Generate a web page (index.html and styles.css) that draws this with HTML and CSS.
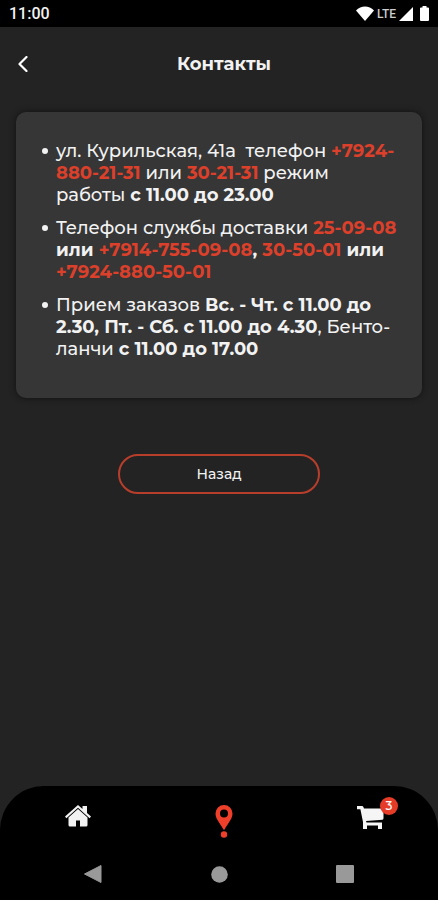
FILE: index.html
```html
<!DOCTYPE html>
<html lang="ru">
<head>
<meta charset="utf-8">
<meta name="viewport" content="width=device-width, initial-scale=1">
<title>Контакты</title>
<link rel="stylesheet" href="styles.css">
</head>
<body>
<div class="status">
  <span class="clock">11:00</span>
  <div class="signals">
    <svg width="18" height="15" viewBox="0 0 18 15" fill="#fff"><path d="M0 4.500C5-.9 13-.9 18 4.500L9 15z"/></svg>
    <span class="network">LTE</span>
    <svg width="14" height="14" viewBox="0 0 14 14" fill="#fff"><path d="M14 0v14H0z"/></svg>
    <svg class="battery" width="9" height="15" viewBox="0 0 9 15" fill="#fff"><path d="M2.500 0h4v1.500H8q1 0 1 1V14q0 1-1 1H1q-1 0-1-1V2.500q0-1 1-1h1.500z"/></svg>
  </div>
</div>
<header class="header">
  <button class="back" type="button" aria-label="Назад">
    <svg width="10" height="16" viewBox="0 0 10 16" fill="none" stroke="#fff" stroke-width="2.200" stroke-linecap="round" stroke-linejoin="round"><path d="M8.500 1L1.500 8l7 7"/></svg>
  </button>
  <h1 class="title">Контакты</h1>
</header>
<main class="main">
  <section class="card">
    <ul class="contacts">
      <li>ул. Курильская, 41а&nbsp; телефон <a href="tel:+79248802131">+7924-<br>880-21-31</a> или <a href="tel:302131">30-21-31</a> режим<br>работы <b>с 11.00 до 23.00</b></li>
      <li>Телефон службы доставки <a href="tel:250908">25-09-08</a><br><b>или <a href="tel:+79147550908">+7914-755-09-08</a>, <a href="tel:305001">30-50-01</a> или</b><br><a href="tel:+79248805001">+7924-880-50-01</a></li>
      <li>Прием заказов <b>Вс. - Чт. с 11.00 до<br>2.30, Пт. - Сб. с 11.00 до 4.30</b>, Бенто-<br>ланчи <b>с 11.00 до 17.00</b></li>
    </ul>
  </section>
  <button class="return" type="button">Назад</button>
</main>
<footer class="footer">
  <nav class="tabs">
    <a class="tab" href="#home" aria-label="Главная">
      <svg width="26" height="22" viewBox="0 0 26 22" fill="#f2f2f2"><path d="M13 0l4.500 4V1h4.500v7l4 3.500-1.400 1.700L13 2.800 1.400 13.200 0 11.500z"/><path d="M13 4l9.500 8.400V20q0 1.500-1.500 1.500h-6V15.500h-4v6H5q-1.500 0-1.500-1.500v-7.600z"/></svg>
    </a>
    <a class="tab" href="#contacts" aria-label="Контакты">
      <svg width="18" height="34" viewBox="0 0 18 34"><path fill="#ee3f2a" fill-rule="evenodd" d="M9 0a8.500 8.500 0 0 1 8.500 8.500C17.500 14 13 18 9.700 24.300q-.7 1-1.400 0C5 18 .5 14 .5 8.500A8.500 8.500 0 0 1 9 0zm0 4.500a4 4 0 1 0 0 8 4 4 0 0 0 0-8z"/><circle cx="9" cy="29.500" r="3.200" fill="#ee3f2a"/></svg>
    </a>
    <a class="tab" href="#cart" aria-label="Корзина">
      <svg width="28" height="25" viewBox="0 0 28 25" fill="#f5f5f5"><path d="M0 1h5q1 0 1.400 1L7 3.500h19.500v9.500q0 1.500-1 1.700L9 16l.5 1.500H25V24h-4v-3.500H10V24H6v-7L3.400 4.300H0z"/></svg>
      <span class="badge">3</span>
    </a>
  </nav>
  <div class="system">
    <svg width="18" height="18" viewBox="0 0 18 18" fill="#999"><path d="M17 .5v17L.5 9z" stroke="#999" stroke-linejoin="round"/></svg>
    <svg width="17" height="17" viewBox="0 0 17 17" fill="#999"><circle cx="8.500" cy="8.500" r="8.300"/></svg>
    <svg width="18" height="18" viewBox="0 0 18 18" fill="#999"><rect width="18" height="18" rx="1"/></svg>
  </div>
</footer>
</body>
</html>
```

FILE: styles.css
```css
* {
  box-sizing: border-box;
}

body {
  margin: 0;
  min-height: 100vh;
  display: flex;
  flex-direction: column;
  background: #232323;
  color: #f2f2f2;
  font-family: Montserrat, Inter, "Noto Sans", sans-serif;
}

button {
  font: inherit;
  color: inherit;
  background: none;
  border: 0;
  padding: 0;
}

a {
  color: #dc402b;
  font-weight: 700;
  text-decoration: none;
}

svg {
  display: block;
}

.status {
  display: flex;
  align-items: center;
  justify-content: space-between;
  height: 27px;
  padding: 0 9px;
  background: #000;
  font-family: Roboto, sans-serif;
}

.clock {
  font-size: 16px;
  font-weight: 500;
}

.signals {
  display: flex;
  align-items: center;
  gap: 3px;
}

.network {
  color: #ccc;
  font-size: 12px;
  font-weight: 500;
}

.battery {
  margin-left: 4px;
}

.header {
  display: grid;
  grid-template-columns: 45px 1fr 35px;
  align-items: center;
  height: 74px;
}

.back {
  display: flex;
  align-items: center;
  justify-content: center;
  height: 44px;
}

.title {
  margin: 0;
  font-size: 18px;
  line-height: 22px;
  font-weight: 700;
  text-align: center;
}

.main {
  flex: 1;
  display: flex;
  flex-direction: column;
  align-items: center;
  gap: 56px;
  padding: 11px 16px;
}

.card {
  width: 100%;
  padding: 28px 16px 27px 40px;
  border-radius: 10px;
  background: #363636;
  box-shadow: 0 0 6px #111;
}

.contacts {
  margin: 0;
  padding: 0;
  list-style: none;
  font-size: 18px;
  font-weight: 500;
  line-height: 22px;
  white-space: nowrap;
}

.contacts b {
  font-weight: 700;
}

.contacts li {
  position: relative;
  margin-bottom: 11px;
}

.contacts li::before {
  content: "";
  position: absolute;
  left: -14px;
  top: 8px;
  width: 6px;
  height: 6px;
  border-radius: 50%;
  background: #f2f2f2;
}

.return {
  width: 202px;
  height: 40px;
  border: 2px solid #b83e2c;
  border-radius: 20px;
  font-size: 14px;
  font-weight: 500;
}

.footer {
  padding: 19px 0 17px;
  border-radius: 44px 44px 0 0;
  background: #000;
}

.tabs {
  display: flex;
  align-items: flex-start;
  justify-content: space-between;
  height: 36px;
  padding: 0 53px 0 65px;
}

.tab {
  position: relative;
}

.badge {
  position: absolute;
  top: -8px;
  right: -13px;
  width: 18px;
  height: 18px;
  border-radius: 50%;
  background: #e63b27;
  color: #fff;
  font-size: 12px;
  line-height: 18px;
  font-weight: 500;
  text-align: center;
}

.system {
  display: flex;
  align-items: center;
  justify-content: space-between;
  height: 18px;
  margin-top: 24px;
  padding: 0 84px;
}
```
